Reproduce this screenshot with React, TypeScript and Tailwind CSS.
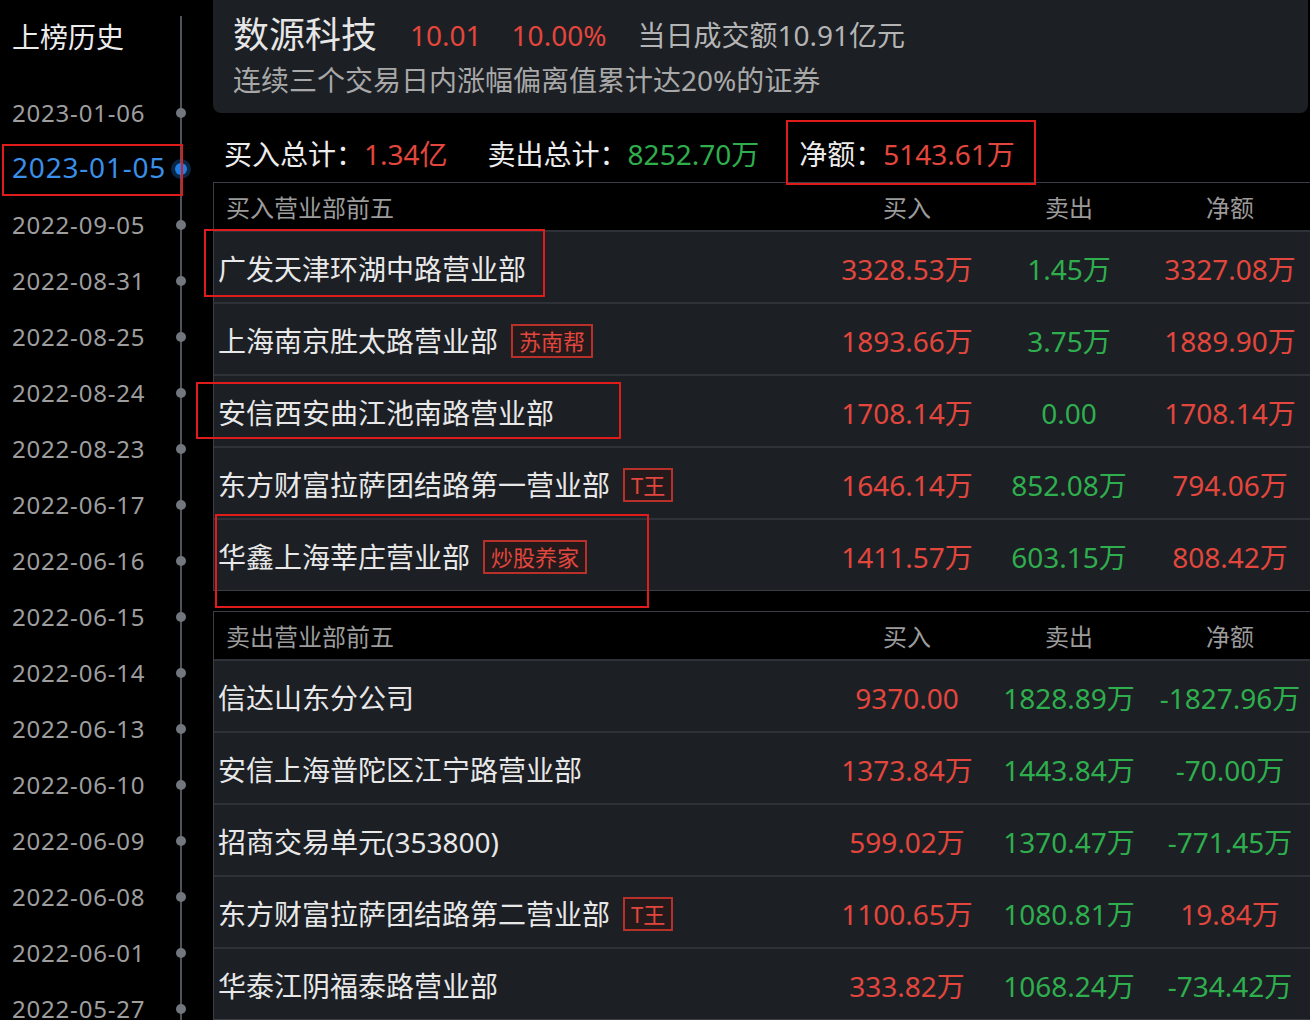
import React from 'react'

type Row = {
  name: string
  tag?: string
  buy: string
  sell: string
  net: string
  buyUp: boolean
  netUp: boolean
}

const dates = [
  '2023-01-06',
  '2023-01-05',
  '2022-09-05',
  '2022-08-31',
  '2022-08-25',
  '2022-08-24',
  '2022-08-23',
  '2022-06-17',
  '2022-06-16',
  '2022-06-15',
  '2022-06-14',
  '2022-06-13',
  '2022-06-10',
  '2022-06-09',
  '2022-06-08',
  '2022-06-01',
  '2022-05-27',
]

const buyRows: Row[] = [
  { name: '广发天津环湖中路营业部', buy: '3328.53万', sell: '1.45万', net: '3327.08万', buyUp: true, netUp: true },
  { name: '上海南京胜太路营业部', tag: '苏南帮', buy: '1893.66万', sell: '3.75万', net: '1889.90万', buyUp: true, netUp: true },
  { name: '安信西安曲江池南路营业部', buy: '1708.14万', sell: '0.00', net: '1708.14万', buyUp: true, netUp: true },
  { name: '东方财富拉萨团结路第一营业部', tag: 'T王', buy: '1646.14万', sell: '852.08万', net: '794.06万', buyUp: true, netUp: true },
  { name: '华鑫上海莘庄营业部', tag: '炒股养家', buy: '1411.57万', sell: '603.15万', net: '808.42万', buyUp: true, netUp: true },
]

const sellRows: Row[] = [
  { name: '信达山东分公司', buy: '9370.00', sell: '1828.89万', net: '-1827.96万', buyUp: true, netUp: false },
  { name: '安信上海普陀区江宁路营业部', buy: '1373.84万', sell: '1443.84万', net: '-70.00万', buyUp: true, netUp: false },
  { name: '招商交易单元(353800)', buy: '599.02万', sell: '1370.47万', net: '-771.45万', buyUp: true, netUp: false },
  { name: '东方财富拉萨团结路第二营业部', tag: 'T王', buy: '1100.65万', sell: '1080.81万', net: '19.84万', buyUp: true, netUp: true },
  { name: '华泰江阴福泰路营业部', buy: '333.82万', sell: '1068.24万', net: '-734.42万', buyUp: true, netUp: false },
]

const RED = 'text-[#e2463c]'
const GREEN = 'text-[#2fae4e]'

function Table({ title, rows }: { title: string; rows: Row[] }) {
  return (
    <div className="border-l border-t border-b border-[#3a3e44]">
      <div className="grid grid-cols-[1fr_162px_162px_160px] h-[47px] pt-[3px] items-center text-[24px] text-[#9b9b9b] bg-black">
        <div className="pl-[12px]">{title}</div>
        <div className="text-center">买入</div>
        <div className="text-center">卖出</div>
        <div className="text-center">净额</div>
      </div>
      {rows.map((r) => (
        <div
          key={r.name}
          className="grid grid-cols-[1fr_162px_162px_160px] h-[72px] pt-[4px] items-center bg-[#1c1f24] border-t-2 border-[#2e3238] text-[28px]"
        >
          <div className="pl-[4px] flex items-center text-[#e8e8e8]">
            <span>{r.name}</span>
            {r.tag && (
              <span className="ml-[13px] h-[34px] px-[6px] flex items-center border-2 border-[#b8302a] bg-[#241a1c] text-[22px] text-[#e2463c] leading-none">
                {r.tag}
              </span>
            )}
          </div>
          <div className={`text-center ${r.buyUp ? RED : GREEN}`}>{r.buy}</div>
          <div className={`text-center ${GREEN}`}>{r.sell}</div>
          <div className={`text-center ${r.netUp ? RED : GREEN}`}>{r.net}</div>
        </div>
      ))}
    </div>
  )
}

export default function App() {
  return (
    <div
      className="relative w-[1310px] h-[1020px] overflow-hidden bg-black flex"
      style={{ fontFamily: '"Noto Sans", "Noto Sans CJK SC", sans-serif' }}
    >
      {/* 上榜历史 */}
      <aside className="w-[213px] shrink-0 pt-[16px]">
        <div className="w-[182px] h-full border-r-2 border-[#4e535a]">
          <div className="h-[42px] pl-[12px] flex items-center text-[28px] text-[#ececec]">上榜历史</div>
          <div className="mt-[27px]">
            {dates.map((d, i) => {
              const active = i === 1
              return (
                <div key={d} className="relative h-[56px] pl-[12px] flex items-center">
                  <span
                    className={
                      active
                        ? 'text-[28px] tracking-[0.8px] text-[#3a8fe8] -mt-[4px]'
                        : 'text-[24px] tracking-[0.8px] text-[#9e9e9e]'
                    }
                  >
                    {d}
                  </span>
                  {active ? (
                    <span className="absolute right-[-7px] w-[12px] h-[12px] rounded-full bg-[#1f7fe6] ring-4 ring-[#1f7fe6]/30" />
                  ) : (
                    <span className="absolute right-[-6px] w-[10px] h-[10px] rounded-full bg-[#72777e]" />
                  )}
                </div>
              )
            })}
          </div>
        </div>
      </aside>

      <main className="flex-1 flex flex-col">
        {/* 标题卡片 */}
        <div className="h-[115px] mr-[2px] bg-[#1c1f24] rounded-b-lg pl-[20px] pt-[10px]">
          <div className="h-[50px] flex items-center text-[28px]">
            <span className="text-[36px] text-[#e6e6e6]">数源科技</span>
            <span className={`ml-[33px] ${RED}`}>10.01</span>
            <span className={`ml-[30px] ${RED}`}>10.00%</span>
            <span className="ml-[31px] text-[#b4b4b4]">当日成交额10.91亿元</span>
          </div>
          <div className="h-[40px] flex items-center text-[28px] text-[#a8a8a8]">
            连续三个交易日内涨幅偏离值累计达20%的证券
          </div>
        </div>

        {/* 合计 */}
        <div className="h-[71px] pl-[11px] pt-[12px] flex items-center text-[28px]">
          <span className="text-[#ececec]">买入总计：</span>
          <span className={RED}>1.34亿</span>
          <span className="ml-[40px] text-[#ececec]">卖出总计：</span>
          <span className={GREEN}>8252.70万</span>
          <span className="ml-[40px] text-[#ececec]">净额：</span>
          <span className={RED}>5143.61万</span>
        </div>

        <Table title="买入营业部前五" rows={buyRows} />
        <div className="h-[20px]" />
        <Table title="卖出营业部前五" rows={sellRows} />
      </main>

      {/* 红色标注框 */}
      <div className="absolute left-[2px] top-[144px] w-[181px] h-[52px] border-2 border-[#e01b1b]" />
      <div className="absolute left-[786px] top-[120px] w-[250px] h-[65px] border-2 border-[#e01b1b]" />
      <div className="absolute left-[204px] top-[229px] w-[341px] h-[68px] border-2 border-[#e01b1b]" />
      <div className="absolute left-[196px] top-[382px] w-[425px] h-[57px] border-2 border-[#e01b1b]" />
      <div className="absolute left-[215px] top-[514px] w-[434px] h-[94px] border-2 border-[#e01b1b]" />
    </div>
  )
}
